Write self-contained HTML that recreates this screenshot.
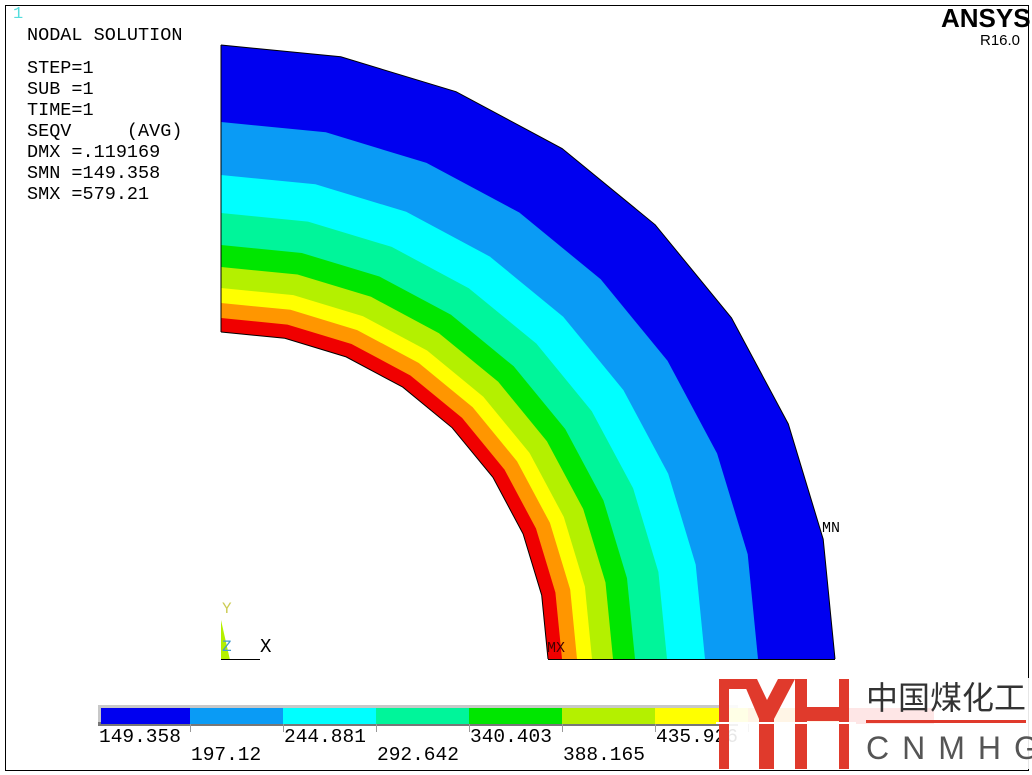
<!DOCTYPE html>
<html><head><meta charset="utf-8"><style>
html,body{margin:0;padding:0;background:#fff;width:1032px;height:775px;overflow:hidden;position:relative}
.t{position:absolute;font-family:"Liberation Mono",monospace;color:#000;white-space:pre;line-height:1}
</style></head><body>
<div style="position:absolute;left:5px;top:5px;width:1022px;height:764px;border:1px solid #000"></div>
<svg id="s" width="1032" height="775" style="position:absolute;left:0;top:0"></svg>
<div class="t" style="left:13px;top:6px;font-size:17px;color:#5dd">1</div>
<div class="t" style="left:27px;top:27px;font-size:18.5px">NODAL SOLUTION</div>
<div class="t" style="left:27px;top:58px;font-size:18.5px;line-height:21px">STEP=1
SUB =1
TIME=1
SEQV     (AVG)
DMX =.119169
SMN =149.358
SMX =579.21</div>
<div class="t" style="left:941px;top:5px;font-family:'Liberation Sans',sans-serif;font-weight:bold;font-size:26px">ANSYS</div>
<div class="t" style="left:980px;top:33px;font-family:'Liberation Sans',sans-serif;font-size:15px">R16.0</div>
<div class="t" style="left:822px;top:521px;font-size:15px">MN</div>
<div class="t" style="left:547px;top:641px;font-size:15px;color:#400">MX</div>
<div class="t" style="left:222px;top:601px;font-size:16px;color:#cc5">Y</div>
<div class="t" style="left:222px;top:639px;font-size:16px;color:#49c">Z</div>
<div class="t" style="left:260px;top:638px;font-size:19px">X</div>
<div class="t" style="left:99px;top:728px;font-size:19.5px">149.358</div>
<div class="t" style="left:191px;top:746px;font-size:19.5px">197.12</div>
<div class="t" style="left:284px;top:728px;font-size:19.5px">244.881</div>
<div class="t" style="left:377px;top:746px;font-size:19.5px">292.642</div>
<div class="t" style="left:470px;top:728px;font-size:19.5px">340.403</div>
<div class="t" style="left:563px;top:746px;font-size:19.5px">388.165</div>
<div class="t" style="left:656px;top:728px;font-size:19.5px">435.926</div>
<!-- logo -->
<div style="position:absolute;left:719px;top:678px;width:310px;height:91px;background:rgba(255,255,255,0.9)"></div>
<svg width="1032" height="775" style="position:absolute;left:0;top:0">
<g fill="#e03a2c">
<rect x="719" y="679" width="10" height="90"/>
<rect x="719" y="679" width="36" height="10"/>
<polygon points="742,679 757,679 767,700 778,679 795,679 774,719 759,719"/>
<rect x="759" y="717" width="15" height="52"/>
<rect x="795" y="679" width="12" height="90"/>
<rect x="807" y="707" width="32" height="14"/>
<rect x="839" y="679" width="10" height="90"/>
<rect x="866" y="720" width="160" height="3"/>
</g>
<rect x="716" y="722" width="140" height="2" fill="#fff"/>
</svg>
<div class="t" style="left:866px;top:682px;font-family:'Liberation Sans','Noto Sans CJK SC',sans-serif;font-size:32px;color:#333">中国煤化工</div>
<div class="t" style="left:866px;top:732px;font-family:'Liberation Sans',sans-serif;font-size:32px;color:#555;letter-spacing:13px">CNMHG</div>
<script>
var s=document.getElementById('s'),ns='http://www.w3.org/2000/svg';
function add(tag,a){var e=document.createElementNS(ns,tag);for(var k in a)e.setAttribute(k,a[k]);s.appendChild(e);return e;}
var cx=221,cy=659;
var R=[614,537,484,446,414,392,371,356,341,327];
var C=['#0000f0','#0a9bf5','#00ffff','#00f59a','#00e600','#b4f000','#ffff00','#ff9600','#f00000'];
function poly(r){var p=[cx+','+cy];for(var i=0;i<=8;i++){var a=i*Math.PI/16;p.push((cx+r*Math.sin(a)).toFixed(1)+','+(cy-r*Math.cos(a)).toFixed(1));}return p.join(' ');}
for(var i=0;i<9;i++)add('polygon',{points:poly(R[i]),fill:C[i]});
add('polygon',{points:poly(327),fill:'#fff'});
add('polyline',{points:poly(614).split(' ').slice(1).join(' '),fill:'none',stroke:'#000','stroke-width':1});
add('line',{x1:221,y1:45,x2:221,y2:332,stroke:'#000'});
add('line',{x1:548,y1:659.5,x2:835,y2:659.5,stroke:'#000'});
add('polyline',{points:poly(327).split(' ').slice(1).join(' '),fill:'none',stroke:'#000','stroke-width':1});
add('polygon',{points:'221,620 221,660 230,660',fill:'#b4f000'});
add('line',{x1:221,y1:659.5,x2:260,y2:659.5,stroke:'#000'});
add('rect',{x:98,y:705,width:640,height:21,fill:'#c8c8c8'});
add('rect',{x:98,y:722,width:640,height:4,fill:'#777'});
var xs=[101,190,283,376,469,562,655,748,841,934];
for(var i=0;i<9;i++)add('rect',{x:xs[i],y:708,width:xs[i+1]-xs[i],height:16,fill:C[i]});
for(var i=1;i<8;i++)add('line',{x1:xs[i]+.5,y1:724,x2:xs[i]+.5,y2:732,stroke:'#999'});
</script>
</body></html>
